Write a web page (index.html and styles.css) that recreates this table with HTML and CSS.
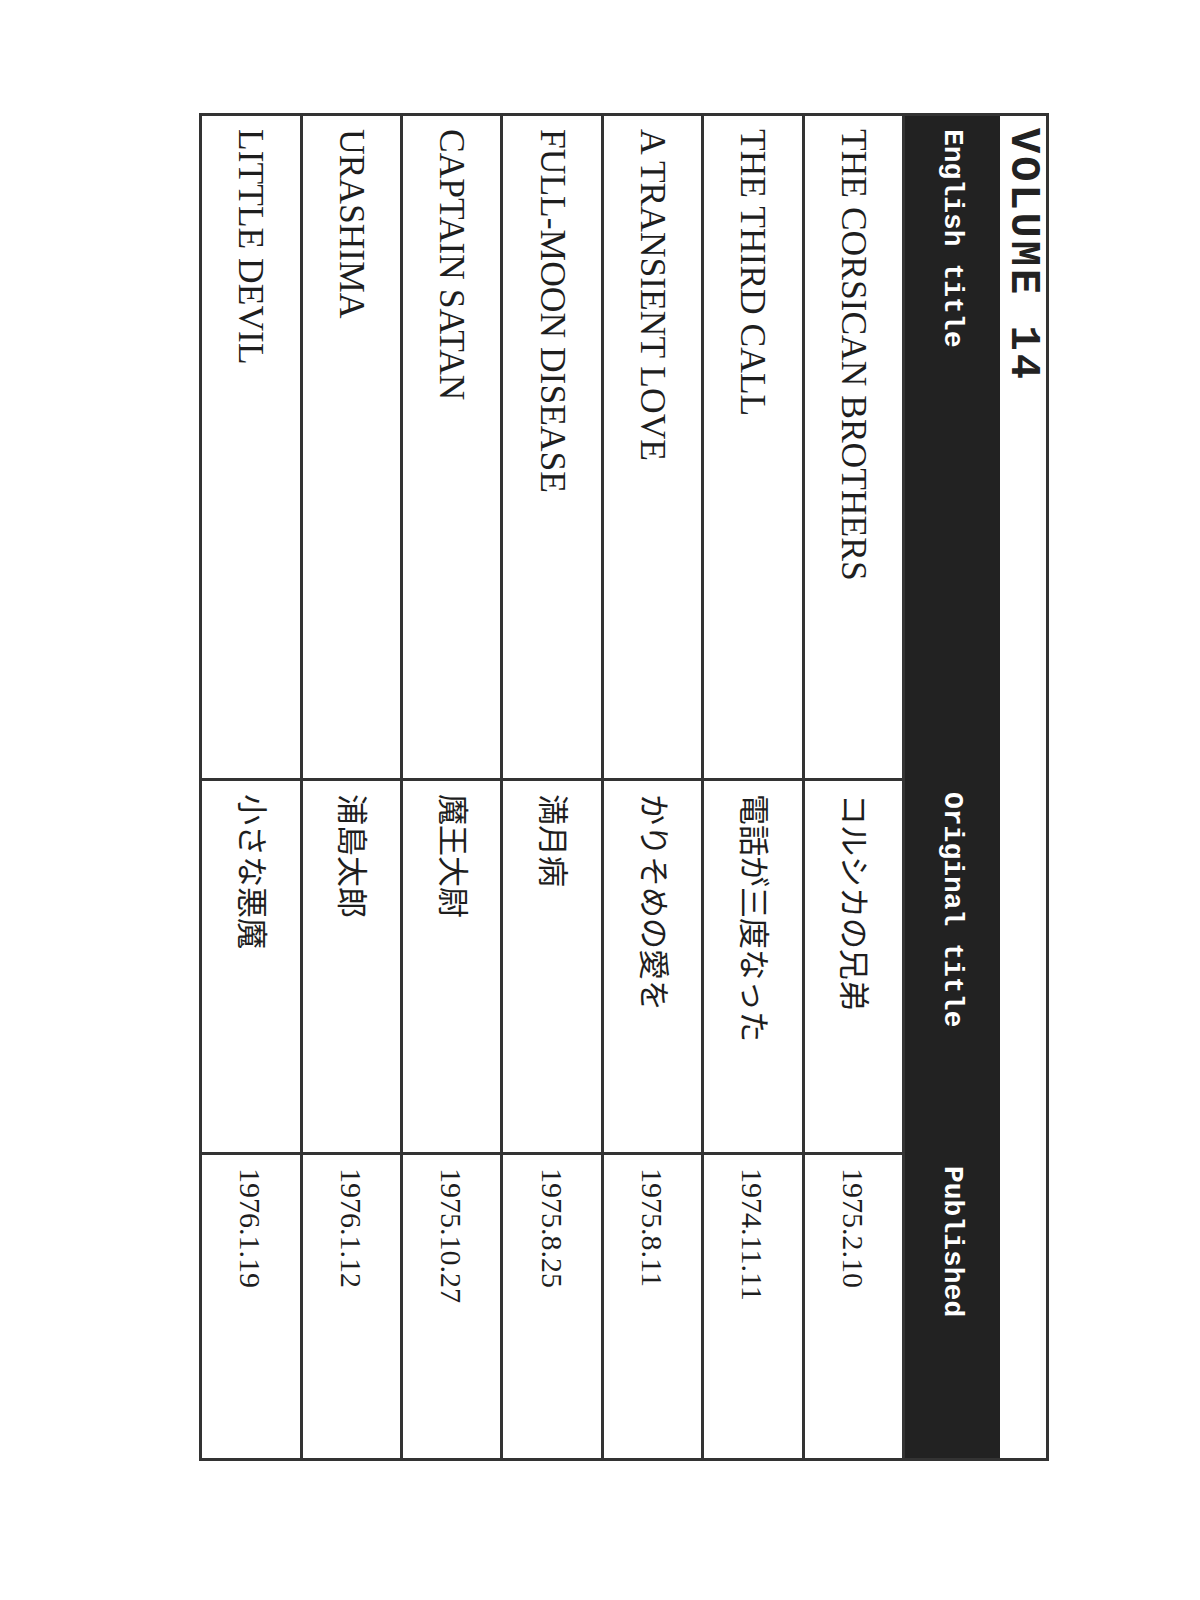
FILE: index.html
```html
<!DOCTYPE html>
<html lang="en">
<head>
<meta charset="utf-8">
<title>Volume 14</title>
<link rel="stylesheet" href="styles.css">
</head>
<body>
<div class="page">
  <div class="frame">
    <div class="caption">VOLUME 14</div>
    <table class="vol">
      <thead>
        <tr>
          <th class="c-en">English title</th>
          <th class="c-jp">Original title</th>
          <th class="c-date">Published</th>
        </tr>
      </thead>
      <tbody>
        <tr><td class="en">THE CORSICAN BROTHERS</td><td class="jp" lang="ja">コルシカの兄弟</td><td class="date">1975.2.10</td></tr>
        <tr><td class="en">THE THIRD CALL</td><td class="jp" lang="ja">電話が三度なった</td><td class="date">1974.11.11</td></tr>
        <tr><td class="en">A TRANSIENT LOVE</td><td class="jp" lang="ja">かりそめの愛を</td><td class="date">1975.8.11</td></tr>
        <tr><td class="en">FULL-MOON DISEASE</td><td class="jp" lang="ja">満月病</td><td class="date">1975.8.25</td></tr>
        <tr><td class="en">CAPTAIN SATAN</td><td class="jp" lang="ja">魔王大尉</td><td class="date">1975.10.27</td></tr>
        <tr><td class="en">URASHIMA</td><td class="jp" lang="ja">浦島太郎</td><td class="date">1976.1.12</td></tr>
        <tr><td class="en">LITTLE DEVIL</td><td class="jp" lang="ja">小さな悪魔</td><td class="date">1976.1.19</td></tr>
      </tbody>
    </table>
  </div>
</div>
</body>
</html>
```
FILE: styles.css
```css
html, body {
  margin: 0;
  padding: 0;
  background: #ffffff;
}

.page {
  padding: 113px 0 0 199px;
}

.frame {
  box-sizing: border-box;
  width: 850px;
  height: 1348px;
  border: 3px solid #333333;
  writing-mode: vertical-rl;
  text-orientation: sideways;
  background: #ffffff;
}

.caption {
  block-size: 46px;
  padding-inline-start: 12px;
  display: flex;
  align-items: center;
  font-family: "Liberation Mono", "Courier New", monospace;
  font-weight: bold;
  font-size: 42px;
  letter-spacing: 3px;
  color: #222222;
  line-height: 1;
}

.vol {
  inline-size: 100%;
  border-collapse: collapse;
  border-style: hidden;
}

.vol th {
  block-size: 95px;
  padding-block: 0;
  padding-inline: 13px 0;
  background: #222222;
  color: #ffffff;
  font-family: "Liberation Mono", "Courier New", monospace;
  font-weight: bold;
  font-size: 28px;
  text-align: start;
  vertical-align: middle;
  border: none;
}

.vol th.c-en { inline-size: 650px; }
.vol th.c-jp { inline-size: 361px; }

.vol td {
  block-size: 97.4px;
  padding-block: 0;
  padding-inline: 13px 0;
  border: 3px solid #333333;
  color: #1e1e1e;
  font-family: "Liberation Serif", "Times New Roman", serif;
  font-size: 35.5px;
  vertical-align: middle;
  text-align: start;
  line-height: 1.1;
}

.vol td.jp {
  font-family: "Liberation Serif", "Noto Sans CJK JP", serif;
  font-size: 31px;
}

.vol td.date {
  font-size: 30px;
}
```
